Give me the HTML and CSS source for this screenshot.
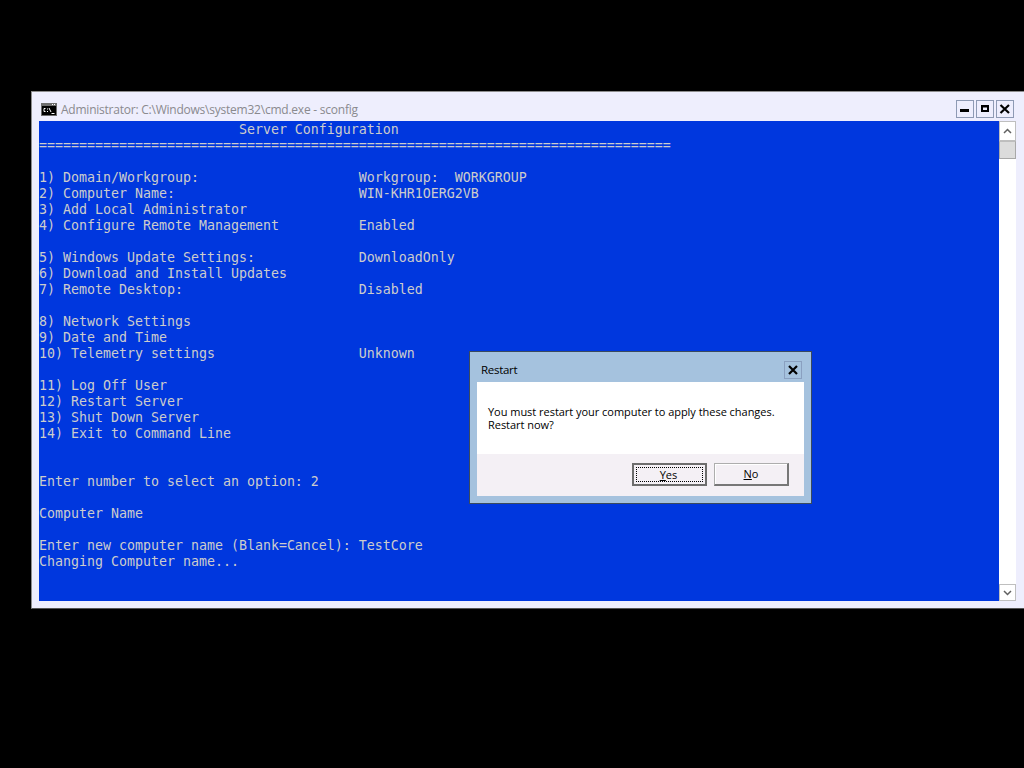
FILE: index.html
```html
<!DOCTYPE html>
<html lang="en">
<head>
<meta charset="utf-8">
<title>Administrator: C:\Windows\system32\cmd.exe - sconfig</title>
<link rel="stylesheet" href="styles.css">
</head>
<body>
<div class="window">
  <div class="titlebar">
    <svg class="cmd-icon" width="16" height="13" viewBox="0 0 16 13"><rect x="0" y="0" width="16" height="13" fill="#6e6e6e"/><rect x="1" y="3" width="14" height="9" fill="#000"/><path d="M11 1.500h1M13 1.500h1" stroke="#fff"/><path d="M4.500 5.500H3v3h1.500M6.500 5.500v1M6.500 8v1M8 5l2 4M10.500 10.500h3" stroke="#fff" fill="none"/></svg>
    <span class="title">Administrator: C:\Windows\system32\cmd.exe - sconfig</span>
    <div class="caption-buttons">
      <button class="cap"><svg width="12" height="8" viewBox="0 0 12 8"><rect x="1" y="4" width="9" height="3" fill="#000"/></svg></button>
      <button class="cap"><svg width="12" height="8" viewBox="0 0 12 8"><path d="M2 0h8v7H2z M4 2.500v2.500h4V2.500z" fill="#000" fill-rule="evenodd"/></svg></button>
      <button class="cap"><svg width="12" height="10" viewBox="0 0 12 10"><path d="M1.500 1l8.500 8M10 1L1.500 9" stroke="#000" stroke-width="2.200" fill="none"/></svg></button>
    </div>
  </div>
  <div class="client">
    <div class="console">
      <div class="line">                         Server Configuration</div>
      <div class="line">===============================================================================</div>
      <div class="line blank"></div>
      <div class="line">1) Domain/Workgroup:                    Workgroup:  WORKGROUP</div>
      <div class="line">2) Computer Name:                       WIN-KHR1OERG2VB</div>
      <div class="line">3) Add Local Administrator</div>
      <div class="line">4) Configure Remote Management          Enabled</div>
      <div class="line blank"></div>
      <div class="line">5) Windows Update Settings:             DownloadOnly</div>
      <div class="line">6) Download and Install Updates</div>
      <div class="line">7) Remote Desktop:                      Disabled</div>
      <div class="line blank"></div>
      <div class="line">8) Network Settings</div>
      <div class="line">9) Date and Time</div>
      <div class="line">10) Telemetry settings                  Unknown</div>
      <div class="line blank"></div>
      <div class="line">11) Log Off User</div>
      <div class="line">12) Restart Server</div>
      <div class="line">13) Shut Down Server</div>
      <div class="line">14) Exit to Command Line</div>
      <div class="line blank"></div>
      <div class="line blank"></div>
      <div class="line">Enter number to select an option: 2</div>
      <div class="line blank"></div>
      <div class="line">Computer Name</div>
      <div class="line blank"></div>
      <div class="line">Enter new computer name (Blank=Cancel): TestCore</div>
      <div class="line">Changing Computer name...</div>
    </div>
    <div class="scrollbar">
      <div class="sb-btn"><svg width="9" height="6" viewBox="0 0 9 6"><path d="M1 5l3.500-3.500L8 5" stroke="#606060" stroke-width="1.500" fill="none"/></svg></div>
      <div class="sb-thumb"></div>
      <div class="sb-track"></div>
      <div class="sb-btn sb-down"><svg width="9" height="6" viewBox="0 0 9 6"><path d="M1 1l3.500 3.500L8 1" stroke="#606060" stroke-width="1.500" fill="none"/></svg></div>
    </div>
  </div>
</div>
<div class="dialog">
  <div class="dialog-title">
    <span>Restart</span>
    <button class="dialog-close"><svg width="12" height="10" viewBox="0 0 12 10"><path d="M2 1l8 8M10 1L2 9" stroke="#000" stroke-width="2.200" fill="none"/></svg></button>
  </div>
  <div class="dialog-body">
    <p class="message">You must restart your computer to apply these changes.<br>Restart now?</p>
    <div class="dialog-actions">
      <button class="btn btn-default"><span class="focus"><u>Y</u>es</span></button>
      <button class="btn"><span class="nofocus"><u>N</u>o</span></button>
    </div>
  </div>
</div>
</body>
</html>
```
FILE: styles.css
```css
html, body { margin: 0; padding: 0; height: 100%; background: #000; overflow: hidden; }
body { position: relative; width: 1024px; height: 768px; }
button { font: inherit; margin: 0; padding: 0; }

.window {
  position: absolute; left: 31px; top: 91px; width: 993px; height: 518px;
  box-sizing: border-box; background: #eeeefd;
  border: 1px solid #8d8d8d; border-right: 0; border-bottom: 1px solid #555;
  display: flex; flex-direction: column;
  padding: 0 7px 7px 7px;
}
.titlebar { height: 29px; flex: none; display: flex; align-items: center; padding-top: 6px; box-sizing: border-box; }
.cmd-icon { margin: 0 4px 0 2px; flex: none; }
.title { font: 12px/16px "Open Sans", "Noto Sans", sans-serif; color: #8a8a8e; letter-spacing: -0.23px; }
.caption-buttons { margin-left: auto; display: flex; gap: 2px; margin-right: 3px; margin-top: -2px; }
.cap {
  width: 18px; height: 18px; box-sizing: border-box; background: #eeeefd;
  border: 1px solid #8e9ab4; display: flex; align-items: center; justify-content: center;
}

.client { flex: 1; display: flex; min-height: 0; }
.console {
  width: 960px; flex: none; box-sizing: border-box; padding-top: 1px; background: #0037de; color: #ccc;
  font: 13.29px/16px "DejaVu Sans Mono", monospace; overflow: hidden;
}
.line { white-space: pre; height: 16px; width: fit-content; }
.blank { width: auto; }
.scrollbar { width: 17px; flex: none; display: flex; flex-direction: column; background: #fff; box-sizing: border-box; }
.sb-btn { height: 20px; flex: none; display: flex; align-items: center; justify-content: center; border: 1px solid #bfbfbf; box-sizing: border-box; background: #fff; }
.sb-down { height: 17px; }
.sb-thumb { height: 18px; flex: none; background: #dcdcdc; border: 1px solid #a8a8a8; border-top-color: #bdbdbd; box-sizing: border-box; }
.sb-track { flex: 1; background: #fff; }

.dialog {
  position: absolute; left: 469px; top: 351px; width: 343px; height: 153px;
  box-sizing: border-box; background: #a5c2de; border: 1px solid #3a4a5e;
  padding: 0 7px 7px 7px; display: flex; flex-direction: column;
  font: 11px/13px "Open Sans", "Noto Sans", sans-serif; color: #000;
}
.dialog-title { height: 30px; flex: none; display: flex; align-items: center; justify-content: space-between; padding: 5px 2px 0 4px; box-sizing: border-box; font-size: 11.5px; letter-spacing: -0.3px; }
.dialog-close {
  width: 18px; height: 18px; box-sizing: border-box; background: #a5c2de; border: 1px solid #8aa0c0;
  display: flex; align-items: center; justify-content: center;
}
.dialog-body { flex: 1; display: flex; flex-direction: column; background: #fff; }
.message { margin: 0; flex: 1; padding: 23px 11px 0; font-size: 11px; letter-spacing: -0.03px; }
.dialog-actions { height: 42px; flex: none; box-sizing: border-box; background: #f4f0f5; display: flex; justify-content: flex-end; gap: 7px; padding: 9px 15px 0 0; }
.btn {
  width: 75px; height: 23px; box-sizing: border-box; background: #f4f0f5; color: #000;
  border: 1px solid #adadad; border-right: 2px solid #777; border-bottom: 2px solid #777; box-shadow: inset 1px 1px 0 #fff;
  padding: 2px; font-size: 11px; line-height: 13px;
}
.btn-default { border: 2px solid #6d6d6d; padding: 2px; box-shadow: none; }
.focus, .nofocus { display: block; height: 100%; box-sizing: border-box; }
.focus { border: 1px dotted #000; padding-right: 2px; }
.nofocus { border: 1px solid transparent; }
```
